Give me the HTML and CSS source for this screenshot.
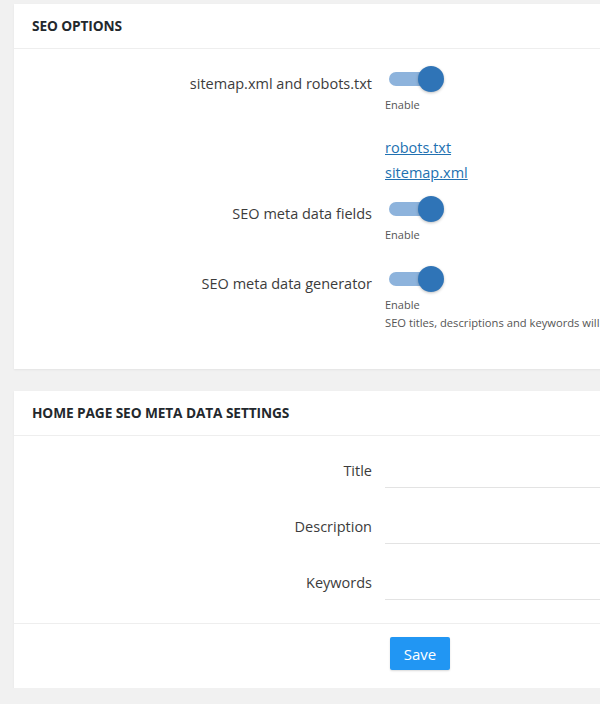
FILE: index.html
```html
<!DOCTYPE html>
<html>
<head>
<meta charset="utf-8">
<link rel="stylesheet" href="styles.css">
</head>
<body>
<div class="page">
  <section class="card card-seo">
    <header class="card-head">SEO OPTIONS</header>
    <div class="card-body seo-body">
      <div class="row row-1">
        <div class="label">sitemap.xml and robots.txt</div>
        <div class="ctrl">
          <span class="toggle"><span class="track"></span><span class="thumb"></span></span>
          <div class="note">Enable</div>
          <div class="links">
            <a href="#">robots.txt</a>
            <a href="#">sitemap.xml</a>
          </div>
        </div>
      </div>
      <div class="row row-2">
        <div class="label">SEO meta data fields</div>
        <div class="ctrl">
          <span class="toggle"><span class="track"></span><span class="thumb"></span></span>
          <div class="note">Enable</div>
        </div>
      </div>
      <div class="row row-3">
        <div class="label">SEO meta data generator</div>
        <div class="ctrl">
          <span class="toggle"><span class="track"></span><span class="thumb"></span></span>
          <div class="note">Enable</div>
          <div class="note hint">SEO titles, descriptions and keywords will be generated automatically</div>
        </div>
      </div>
    </div>
  </section>

  <section class="card card-home">
    <header class="card-head">HOME PAGE SEO META DATA SETTINGS</header>
    <div class="card-body home-body">
      <div class="frow">
        <label class="flabel">Title</label>
        <input class="field" type="text">
      </div>
      <div class="frow">
        <label class="flabel">Description</label>
        <input class="field" type="text">
      </div>
      <div class="frow">
        <label class="flabel">Keywords</label>
        <input class="field" type="text">
      </div>
    </div>
    <footer class="card-foot">
      <div></div>
      <div><button class="btn">Save</button></div>
    </footer>
  </section>
</div>
</body>
</html>
```

FILE: styles.css
```css
html, body {
  margin: 0;
  padding: 0;
  background: #f1f1f1;
  overflow: hidden;
}
body {
  font-family: "Open Sans", "Noto Sans", sans-serif;
  color: #444;
}
.page {
  padding: 4px 0 0 14px;
  width: 640px;
}
.card {
  background: #fff;
  box-shadow: 0 1px 2px rgba(0,0,0,0.06);
}
.card-home {
  margin-top: 22px;
}
.card-head {
  height: 44px;
  line-height: 44px;
  padding-left: 18px;
  font-size: 13.7px;
  font-weight: 700;
  color: #23282d;
  letter-spacing: -0.1px;
  border-bottom: 1px solid #eeeeee;
}
.seo-body {
  padding: 17px 0 37px;
}
.row {
  display: grid;
  grid-template-columns: 358px 1fr;
  column-gap: 13px;
}
.row-2 { margin-top: 11px; }
.row-3 { margin-top: 22px; }
.label {
  text-align: right;
  font-size: 14.5px;
  line-height: 20px;
  padding-top: 8px;
  white-space: nowrap;
  color: #3c3c3c;
}
.ctrl {
  white-space: nowrap;
}
.toggle {
  position: relative;
  display: block;
  width: 60px;
  height: 26px;
}
.track {
  position: absolute;
  left: 4px;
  top: 6px;
  width: 44px;
  height: 14px;
  border-radius: 7px;
  background: #8db3dc;
}
.thumb {
  position: absolute;
  left: 33px;
  top: 0;
  width: 26px;
  height: 26px;
  border-radius: 50%;
  background: #2f74b7;
  box-shadow: 0 1px 3px rgba(0,0,0,0.25);
}
.note {
  font-size: 11px;
  line-height: 18px;
  color: #555;
}
.hint {
  font-size: 11.2px;
}
.toggle + .note {
  margin-top: 4px;
}
.links {
  margin-top: 21px;
  display: flex;
  flex-direction: column;
}
.links a {
  font-size: 14.5px;
  line-height: 25px;
  color: #2271b1;
  text-decoration: underline;
}
.home-body {
  padding: 16px 0 23px;
  display: flex;
  flex-direction: column;
  gap: 20px;
}
.frow {
  display: grid;
  grid-template-columns: 358px 1fr;
  column-gap: 13px;
  align-items: center;
}
.flabel {
  text-align: right;
  font-size: 14.5px;
  color: #3c3c3c;
}
.field {
  box-sizing: border-box;
  height: 36px;
  border: none;
  border-bottom: 1px solid #e3e3e3;
  outline: none;
  background: transparent;
  font-family: inherit;
  font-size: 14px;
  padding: 0;
}
.card-foot {
  border-top: 1px solid #eeeeee;
  padding: 13px 0 18px;
  display: grid;
  grid-template-columns: 358px 1fr;
  column-gap: 13px;
}
.btn {
  margin-left: 5px;
  width: 60px;
  height: 33px;
  border: none;
  border-radius: 2px;
  background: #2196f3;
  color: #fff;
  font-family: inherit;
  font-size: 15px;
  box-shadow: 0 1px 2px rgba(0,0,0,0.15);
  padding: 0;
}
```
